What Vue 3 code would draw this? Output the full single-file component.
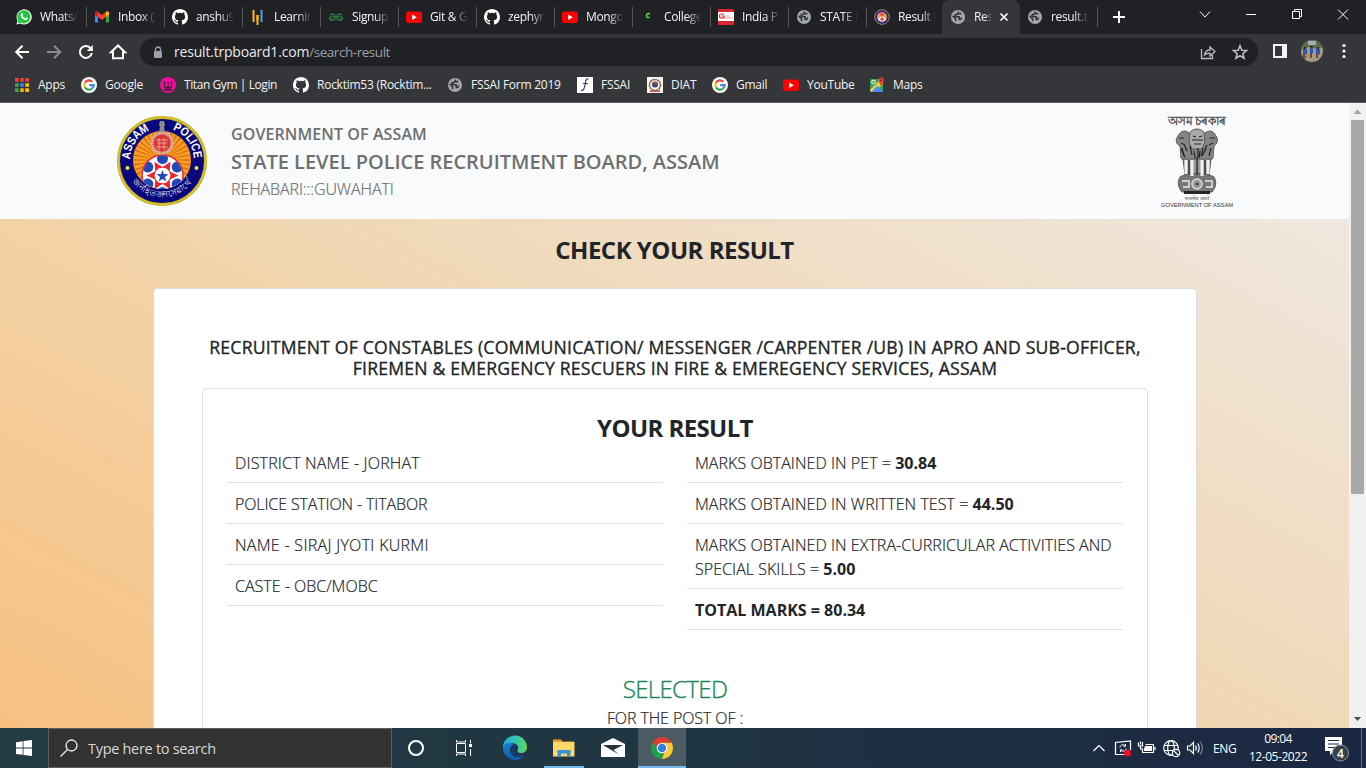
<script setup>
const tabs = [
  { t: 'WhatsApp', i: 'whatsapp' }, { t: 'Inbox (3)', i: 'gmail' }, { t: 'anshu99', i: 'github' },
  { t: 'Learning', i: 'bars' }, { t: 'Signup', i: 'gfg' }, { t: 'Git & Gi', i: 'youtube' },
  { t: 'zephyrs', i: 'github' }, { t: 'Mongo', i: 'youtube' }, { t: 'College', i: 'leaf' },
  { t: 'India Po', i: 'post' }, { t: 'STATE L', i: 'globe' }, { t: 'Result P', i: 'police' },
  { t: 'Result', i: 'globe', active: true }, { t: 'result.tr', i: 'globe' },
]
const bookmarks = [
  { t: 'Apps', i: 'apps', w: 67 }, { t: 'Google', i: 'google', w: 79 },
  { t: 'Titan Gym | Login', i: 'titan', w: 133 }, { t: 'Rocktim53 (Rocktim...', i: 'github', w: 154 },
  { t: 'FSSAI Form 2019', i: 'globe', w: 130 }, { t: 'FSSAI', i: 'fssai', w: 70 },
  { t: 'DIAT', i: 'diat', w: 65 }, { t: 'Gmail', i: 'google', w: 71 },
  { t: 'YouTube', i: 'youtube', w: 86 }, { t: 'Maps', i: 'maps', w: 70 },
]
const left = [
  { t: 'DISTRICT NAME - JORHAT', s: 0.18 }, { t: 'POLICE STATION - TITABOR', s: -0.12 },
  { t: 'NAME - SIRAJ JYOTI KURMI', s: 0.3 }, { t: 'CASTE - OBC/MOBC', s: 0 },
]
const right = [
  ['MARKS OBTAINED IN PET = ', '30.84'],
  ['MARKS OBTAINED IN WRITTEN TEST = ', '44.50'],
  ['MARKS OBTAINED IN EXTRA-CURRICULAR ACTIVITIES AND SPECIAL SKILLS = ', '5.00'],
  ['', 'TOTAL MARKS = 80.34'],
]
const rays = Array.from({ length: 36 }, (_, n) => n * 10)
const sixths = [0, 60, 120, 180, 240, 300]
</script>

<template>
  <div class="screen">
    <svg class="defs" width="0" height="0">
      <symbol id="whatsapp" viewBox="0 0 16 16"><path d="M.4 15.6 1.5 11.7A7.6 7.6 0 1 1 4.4 14.6Z" fill="#fff" /><path d="M1.7 14.3 2.4 11.6A6.6 6.6 0 1 1 4.6 13.6Z" fill="#25c63f" /><path d="M5.4 4.3c.5-.5 1-.3 1.1 0l.6 1.4c.1.4-.5.8-.6 1.1.6 1.2 1.4 1.9 2.6 2.4.3-.1.7-.9 1.1-.8l1.4.7c.5.3 0 1.3-.6 1.7-1 .6-2.6.1-4-.9C5.400 8.700 4.400 7.100 4.600 5.700c.1-.6.4-1.100.8-1.400Z" fill="#fff" /></symbol>
      <symbol id="gmail" viewBox="0 0 16 16"><path d="M1 4v9.500h3V7z" fill="#4285f4" /><path d="M15 4v9.500h-3V7z" fill="#34a853" /><path d="M1 4.300C1 2.400 3 2 4.300 3L8 5.900 11.700 3C13 2 15 2.400 15 4.300L14.700 6 8 11 1.300 6z" fill="#ea4335" /><path d="M12 2.900C13.500 2 15 2.600 15 4.300v1.500l-3 2.300z" fill="#fbbc04" /><path d="M1 4.300v1.500l3 2.300V2.900C2.500 2 1 2.600 1 4.300" fill="#c5221f" /></symbol>
      <symbol id="github" viewBox="0 0 16 16"><path fill="#fff" d="M8 0C3.580 0 0 3.580 0 8c0 3.540 2.290 6.530 5.470 7.590.4.070.55-.17.55-.38 0-.19-.010-.82-.010-1.490-2.010.37-2.530-.49-2.690-.94-.090-.23-.48-.94-.82-1.130-.28-.15-.68-.52-.010-.53.63-.010 1.080.58 1.230.82.72 1.210 1.870.87 2.330.66.070-.52.28-.87.51-1.070-1.780-.2-3.640-.89-3.640-3.950 0-.87.31-1.590.82-2.150-.080-.2-.36-1.020.080-2.120 0 0 .67-.21 2.200.82a7.600 7.600 0 0 1 4 0c1.530-1.040 2.200-.82 2.200-.82.44 1.100.16 1.920.080 2.120.51.56.82 1.270.82 2.150 0 3.070-1.870 3.750-3.650 3.950.29.25.54.73.54 1.480 0 1.070-.010 1.930-.010 2.200 0 .21.15.46.55.38A8 8 0 0 0 16 8c0-4.420-3.580-8-8-8Z" /></symbol>
      <symbol id="bars" viewBox="0 0 16 16"><path d="M3.500 1v12M7.500 6v5M7.500 13v3" stroke="#fbb81b" stroke-width="2" /><path d="M11.500 1v12" stroke="#4ba5d8" stroke-width="2" /><path d="M7.500 6v7" stroke="#fbb81b" stroke-width="2" /></symbol>
      <symbol id="gfg" viewBox="0 0 16 16"><path d="M2 6.200C4 4.200 7.400 5 7.400 8M1.500 8h13M1.500 8c0 4 5 4 5.800.8M14 6.200C12 4.200 8.600 5 8.600 8M14.500 8c0 4-5 4-5.800.8" fill="none" stroke="#2f8d46" stroke-width="1.200" /></symbol>
      <symbol id="youtube" viewBox="0 0 16 16"><rect y="2.500" width="16" height="11.500" rx="2.800" fill="#f00" /><path d="m6.200 5.500 4.600 2.700-4.600 2.700z" fill="#fff" /></symbol>
      <symbol id="leaf" viewBox="0 0 16 16"><path d="M4 4C9 2 12 3 12 3s-1 8-6 8l-1.500 3z" fill="#10300f" /><path d="M10 5C7.500 3.800 6.500 5 6.500 7s2 2 3 1" fill="none" stroke="#8bc486" stroke-width="1.400" /></symbol>
      <symbol id="post" viewBox="0 0 16 16"><path d="M0 0h16v16H0z" fill="#fff" /><path d="M0 0h16v3H0zM0 12h16v4H0z" fill="#d9252d" /><path d="M6 5H3.500a2 2 0 0 0 0 4H6V7H4" fill="none" stroke="#d9252d" stroke-width="1.200" /><path d="M7 9h8M8 7h3" stroke="#e8868a" stroke-width=".8" /></symbol>
      <symbol id="globe" viewBox="0 0 16 16"><circle cx="8" cy="8" r="7" fill="#a4a8ad" /><path d="M8.200 2.500v1.800L6.800 5.600H5.200v2.200h4v2.700h1.500l1-2.200M2.600 6.700l3 3.300v2.200M8.200 4.600h3.200" stroke="#34353a" stroke-width="1.600" fill="none" /></symbol>
      <symbol id="police" viewBox="0 0 16 16"><circle cx="8" cy="8" r="7.300" fill="#24248c" stroke="#a88d4c" /><circle cx="8" cy="8" r="5" fill="#ee9a3c" /><circle cx="8" cy="5" r="2.200" fill="#d6605a" /><path d="M3.800 11a4.300 4.300 0 0 1 8.400 0L8 13z" fill="#eef" /><path d="m8 7.500 1 2 2 .5-2 1-1 1.500-1-1.500-2-1 2-.500z" fill="#e0453d" /></symbol>
      <symbol id="apps" viewBox="0 0 16 16"><path d="M1 1h4v4H1zM6 1h4v4H6zM11 1h4v4h-4z" fill="#ea4335" /><path d="M11 11h4v4h-4zM11 6h4v4h-4z" fill="#fbbc04" /><path d="M1 6h4v4H1z" fill="#34a853" /><path d="M6 6h4v4H6z" fill="#4285f4" /><path d="M1 11h4v4H1z" fill="#34a853" /><path d="M6 11h4v4H6z" fill="#fbbc04" /><path d="M5.500 0v16M10.500 0v16M0 5.500h16M0 10.500h16" stroke="#35363a" stroke-width="1.600" /></symbol>
      <symbol id="google" viewBox="0 0 16 16"><circle cx="8" cy="8" r="8" fill="#fff" /><g fill="none" stroke-width="2.200"><path d="M11.300 4.700A4.700 4.700 0 0 0 3.900 5.700" stroke="#ea4335" /><path d="M3.900 5.700a4.700 4.700 0 0 0 0 4.600" stroke="#fbbc05" /><path d="M3.900 10.300a4.700 4.700 0 0 0 7.200 1.200" stroke="#34a853" /><path d="M11.100 11.500A4.700 4.700 0 0 0 12.700 8.200H8.200" stroke="#4285f4" /></g></symbol>
      <symbol id="titan" viewBox="0 0 16 16"><circle cx="8" cy="8" r="8" fill="#f50a9c" /><path d="M4.500 4v5q0 2 1.800 2T8 9V5v4q0 2 1.800 2t1.700-2V4M3.500 13h9" fill="none" stroke="#35202f" stroke-width="1.300" /></symbol>
      <symbol id="fssai" viewBox="0 0 16 16"><path d="M0 0h16v16H0z" fill="#fff" /><path d="M11.500 2C8.500 1.500 8.600 5 8 8s-1 6-4 5.500M6 6.500h5" fill="none" stroke="#3b3c78" stroke-width="1.200" /></symbol>
      <symbol id="diat" viewBox="0 0 16 16"><path d="M0 0h16v16H0z" fill="#f7f3ec" /><circle cx="8" cy="8" r="5.500" fill="none" stroke="#7c6043" stroke-width="1.600" stroke-dasharray="2 .5" /><circle cx="8" cy="7.500" r="3" fill="#304b84" /><path d="M5.500 6h5M3 14h10" stroke="#b64b38" stroke-width="1.300" /></symbol>
      <symbol id="maps" viewBox="0 0 16 16"><rect x="1" y="2" width="13" height="13" rx="1.500" fill="#34a853" /><path d="M1 13 12 2l2 1v4L5.500 15H2z" fill="#f2d04c" /><path d="m8.500 8.500 5.500 6.500H2.500z" fill="#4c8cf5" /><circle cx="4.500" cy="5" r="1.800" fill="none" stroke="#fff" /><path d="M12.200 9C11 6.600 9.500 5.500 9.500 3.200a2.700 2.700 0 0 1 5.400 0C14.900 5.500 13.300 6.600 12.200 9Z" fill="#ea4335" /><circle cx="12.200" cy="3.200" r="1" fill="#8c1d18" /></symbol>
    </svg>

    <div class="strip">
      <div v-for="(tab, n) in tabs" :key="n" class="tab" :class="{ active: tab.active, before: n === 11 }">
        <svg class="fav"><use :href="'#' + tab.i" /></svg>
        <span class="label">{{ tab.t }}</span>
        <svg v-if="tab.active" class="x" viewBox="0 0 10 10"><path d="m1.500 1.500 7 7m0-7-7 7" /></svg>
      </div>
      <svg class="plus" viewBox="0 0 14 14"><path d="M7 1v12M1 7h12" /></svg>
      <svg class="winctl" viewBox="0 0 150 34"><path d="m9 11.500 5 5.500 5-5.500M55 14.500h10" /><path d="M101.500 11.500h7v7h-7zM103.500 11V9.500h7v7H109" /><path d="m147 9.500 10 10m0-10-10 10" /></svg>
    </div>

    <div class="toolbar">
      <svg class="nav" viewBox="0 0 136 34">
        <path d="M29 18H16.500m6-6.300L16.200 18l6.300 6.300" /><path class="dim" d="M47 18h13m-6-6.300 6.300 6.300-6.300 6.300" />
        <path d="M90.700 14.300A6 6 0 1 0 91.800 19" /><path class="solid" d="M92.800 11v6h-6z" />
        <path d="M111 18.200 118 11.500l7 6.700h-2v6h-10v-6z" />
      </svg>
      <div class="omni">
        <svg class="lock" viewBox="0 0 10 13"><path d="M2.500 5V3.500a2.500 2.500 0 0 1 5 0V5" fill="none" stroke="#9aa0a6" stroke-width="1.400" /><rect x="1" y="5" width="8" height="7" rx="1" fill="#9aa0a6" /></svg>
        <span class="url">result.trpboard1.com<i>/search-result</i></span>
        <svg class="share" viewBox="0 0 16 16"><path d="M1.500 5v9.500h11V11M4.500 11c.5-3.500 2.500-5 5.500-5V3l5 4.500L10 12V9.200c-2.300-.1-4 .4-5.500 1.800Z" /></svg>
        <svg class="star" viewBox="0 0 16 16"><path d="m8 1.700 1.800 4.500 4.800.3L10.900 9.600l1.200 4.700L8 11.700l-4.100 2.600 1.200-4.700L1.400 6.500l4.800-.3z" /></svg>
      </div>
      <svg class="panel" viewBox="0 0 14 14"><path d="M1 1h12v12H1z" fill="none" stroke="#f1f3f4" stroke-width="2" /><path d="M9 1h4v12H9z" fill="#f1f3f4" /></svg>
      <svg class="avatar" viewBox="0 0 22 22"><clipPath id="av"><circle cx="11" cy="11" r="11" /></clipPath><g clip-path="url(#av)"><path d="M0 0h22v22H0z" fill="#a39b80" /><path d="M0 0h22v7l-6 2-8-2-8 3z" fill="#5c6d4a" /><path d="M7 1h8v4H7z" fill="#a0adbd" /><path d="M2 9h4v5H2zM9 8h3v5H9zM15 9h4v5h-4z" fill="#3153b9" /><path d="M3 14v5M10 13v5M16 14v4" stroke="#52323a" stroke-width="1.500" /><path d="M3 8h2M9.500 7h2M16 8h2" stroke="#2f2421" stroke-width="2" /><path d="M5 15v3M17 14h2" stroke="#d23431" /></g></svg>
      <svg class="dots" viewBox="0 0 4 16"><circle cx="2" cy="2.500" r="1.600" /><circle cx="2" cy="8" r="1.600" /><circle cx="2" cy="13.500" r="1.600" /></svg>
    </div>

    <div class="marks">
      <div v-for="b in bookmarks" :key="b.t" class="bm" :style="{ width: b.w + 'px' }">
        <svg class="fav"><use :href="'#' + b.i" /></svg><span>{{ b.t }}</span>
      </div>
    </div>

    <div class="view">
      <main class="page">
        <header class="head">
          <svg class="logo" viewBox="0 0 90 90">
            <circle cx="45" cy="45" r="43.500" fill="#08087c" stroke="#c9b423" stroke-width="3" /><circle cx="45" cy="45" r="43.500" fill="none" stroke="#f1e04c" stroke-width="1" stroke-dasharray="1 1" />
            <circle cx="45" cy="44" r="29" fill="#f6a11c" />
            <path v-for="r in rays" :key="r" d="M45 44 44.200 15h1.600z" fill="#dd6920" :transform="`rotate(${r} 45 44)`" />
            <clipPath id="inner"><circle cx="45" cy="44" r="29" /></clipPath>
            <clipPath id="ball"><circle cx="45.500" cy="59.500" r="20" /></clipPath>
            <g clip-path="url(#inner)">
              <circle cx="45.500" cy="59.500" r="20.500" fill="#fff" stroke="#e32b36" stroke-width="1.500" />
              <g clip-path="url(#ball)">
                <g v-for="r in sixths" :key="r" :transform="`rotate(${r} 45.500 59.500)`">
                  <circle cx="45.500" cy="42.500" r="5.500" fill="#2448b4" />
                </g>
                <g v-for="r in sixths" :key="r" :transform="`rotate(${r + 30} 45.500 59.500)`">
                  <path d="m45.500 43.500 4.500 9.500-4.500-1.500-4.500 1.500z" fill="#ed2634" />
                </g>
              </g>
              <path d="m45.500 54 1.500 4 4.500.3-3.500 2.800 1.200 4.200-3.700-2.300-3.700 2.300 1.200-4.200-3.500-2.800 4.500-.3z" fill="#2448b4" />
            </g>
            <circle cx="45" cy="27" r="10" fill="#df3430" stroke="#d4b2aa" stroke-width="3" stroke-dasharray="2 .5" /><path d="M39 24h12M40 27h10M39 31h12M42 22v12M47 22v12" stroke="#e5a19a" stroke-width="1" />
            <path d="M43 5h4l1 4-1 2 1 5h-6l1-5-1-2z" fill="#8b8b88" />
            <path id="arcTop" d="M13.200 43.500A31.800 31.800 0 0 1 76.800 43.500" fill="none" />
            <path id="arcBottom" d="M12 61A37 37 0 0 0 78 61" fill="none" />
            <text class="badge"><textPath href="#arcTop" startOffset="0%" textLength="37" lengthAdjust="spacingAndGlyphs">ASSAM</textPath></text>
            <text class="badge"><textPath href="#arcTop" startOffset="61%" textLength="38" lengthAdjust="spacingAndGlyphs">POLICE</textPath></text>
            <text class="motto"><textPath href="#arcBottom" startOffset="50%" text-anchor="middle">জনহিতজনসেৱাৰ্থে</textPath></text>
            <circle cx="10.500" cy="52" r="2" fill="#f5df3d" /><circle cx="79.500" cy="52" r="2" fill="#f5df3d" />
          </svg>
          <div class="heads"><p class="g1">GOVERNMENT OF ASSAM</p><p class="g2">STATE LEVEL POLICE RECRUITMENT BOARD, ASSAM</p><p class="g3">REHABARI:::GUWAHATI</p></div>
          <svg class="emblem" viewBox="0 0 74 94">
            <text x="37" y="9.500" text-anchor="middle" class="as1">অসম চৰকাৰ</text>
            <g stroke="#5a5a5a" stroke-width="1">
              <path d="M18 21c3-6 8-6 11-3l1 8 14 0 1-8c4-3 8-3 11 3 3 4 1 8-2 10l-1 12-4 4H25l-4-4-1-12c-4-2-5-6-2-10Z" fill="#858585" />
              <path d="M30 17c4-4 10-4 14 0l1 10-3 7H32l-3-7Z" fill="#aaa" />
              <path d="M23 44h28l-2 16H25Z" fill="#999" />
              <path d="M20 62c9-5 25-5 34 0 3 6 2 10-2 15H22c-4-5-5-9-2-15Z" fill="#777" />
            </g>
            <path d="M26 45v14M32 45v16M42 45v16M48 45v14" stroke="#f0f0f0" stroke-width="3" /><path d="M29 45v14M37 42v18M45 45v14" stroke="#333" stroke-width="1.500" />
            <path d="m33 21 3 1m3 0 3-1M32 25h11M34 29h7M19 23h5m26 0h5M24 29l3 7m3-5 2 9m6-7 0 9m5-9-2 8m6-11-3 7m-23-3 4 8m17-1 4-7M22 33l2 8m10-5 1 7m5-7-1 7m12-10-2 8M21 28l4 2m28-2-4 2" fill="none" stroke="#252525" stroke-width="1.200" />
            <circle cx="37" cy="69" r="5" fill="#999" stroke="#ddd" stroke-width="1.500" /><circle cx="37" cy="69" r="1.500" fill="#444" /><path d="M22 66h7v6h-6m22-6h7v6h-6" stroke="#ccc" stroke-width="2" fill="none" /><path d="M24 77.500h26" stroke="#252525" stroke-width="3" />
            <text x="37" y="85" text-anchor="middle" class="as2">सत्यमेव जयते</text>
            <text x="1" y="92" textLength="72" lengthAdjust="spacingAndGlyphs" class="as3">GOVERNMENT OF ASSAM</text>
          </svg>
        </header>
        <section class="body">
          <h2 class="check">CHECK YOUR RESULT</h2>
          <div class="card">
            <h5 class="rec"><span>RECRUITMENT OF CONSTABLES (COMMUNICATION/ MESSENGER /CARPENTER /UB) IN APRO AND SUB-OFFICER,</span><span>FIREMEN &amp; EMERGENCY RESCUERS IN FIRE &amp; EMEREGENCY SERVICES, ASSAM</span></h5>
            <div class="inner">
              <h2 class="your">YOUR RESULT</h2>
              <div class="cols">
                <div><div v-for="l in left" :key="l.t" class="row" :style="{ letterSpacing: l.s + 'px' }">{{ l.t }}</div></div>
                <div><div v-for="r in right" :key="r[1]" class="row">{{ r[0] }}<b>{{ r[1] }}</b></div></div>
              </div>
              <p class="sel">SELECTED</p>
              <p class="post">FOR THE POST OF :</p>
            </div>
          </div>
        </section>
      </main>
      <aside class="scroll"><svg viewBox="0 0 17 17"><path d="m4.500 11 4-4.500 4 4.500z" fill="#a3a3a3" /></svg><div class="thumb"></div><svg class="down" viewBox="0 0 17 17"><path d="m5 6 3.500 4L12 6z" fill="#505050" /></svg></aside>
    </div>

    <footer class="task">
      <div class="start"><svg viewBox="0 0 16 16"><path d="m0 2.200 6.700-1v6.400H0zM7.500 1.100 16 0v7.600H7.500zM0 8.400h6.700v6.400L0 13.900zM7.500 8.400H16V16l-8.500-1.100z" fill="#fff" /></svg></div>
      <div class="search"><svg viewBox="0 0 18 18"><circle cx="11.500" cy="6.500" r="5.500" /><path d="m7.500 10.500-7 7" /></svg><span>Type here to search</span></div>
      <div class="app"><svg width="24" height="24" viewBox="0 0 24 24"><circle cx="12" cy="12" r="7" fill="none" stroke="#fff" stroke-width="2" /></svg></div>
      <div class="app"><svg width="24" height="24" viewBox="0 0 24 24"><path d="M3.500 7.500h9v9h-9zM3.500 4v2h9V4M3.500 20v-2h9v2M17.500 4v3.500M17.500 13v7" fill="none" stroke="#fff" /><path d="M16 8h3v3h-3z" fill="#fff" /></svg></div>
      <div class="app"><svg width="26" height="26" viewBox="0 0 26 26">
        <defs><linearGradient id="eg" x1="0" x2="1"><stop offset="0" stop-color="#2aa9dc" /><stop offset=".55" stop-color="#36c6b5" /><stop offset="1" stop-color="#64d64d" /></linearGradient><linearGradient id="eb" y1="0" y2="1" x2="0"><stop offset="0" stop-color="#1683d8" /><stop offset="1" stop-color="#0e5ba8" /></linearGradient></defs>
        <path d="M1 13A12 12 0 0 1 25 12c0 4-2.500 6-6 6-2.500 0-4-1-3.500-2.500 1.500-3 .5-6-3-7C7 7 2 10 1 13" fill="url(#eg)" /><path d="M1 13C2 8 8 6.500 12 9c-4 1-6 7-2 11 3 3 8 3 13-.5A12 12 0 0 1 1 13" fill="url(#eb)" /><path d="M12 10c-4 3-4 9 1 11 3 1 7 1 10-1.500-5 2-10 .5-11-4-.3-2 .5-3 2-4z" fill="#113f7c" /></svg></div>
      <div class="app run"><svg width="24" height="24" viewBox="0 0 24 24"><path d="M1 3.500h8l1.500 2H22v14H1z" fill="#e9a01e" /><path d="M1 6h21.500v14.500H1z" fill="#ffd76a" /><path d="M5.500 20.500v-6.500h13v6.500h-3.500v-3h-6v3z" fill="#3792da" /></svg></div>
      <div class="app"><svg width="24" height="24" viewBox="0 0 24 24"><path d="m0 8 12-6 12 6v13H0z" fill="#fff" /><path d="M2 9h20L12.500 14l5.500 4.500L12 15z" fill="#21343f" /></svg></div>
      <div class="app run on"><svg width="24" height="24" viewBox="0 0 24 24"><path d="M21.520 6.500A11 11 0 0 1 12 23l0-11z" fill="#fcc934" /><path d="M12 23A11 11 0 0 1 2.480 6.500L12 12l3 3z" fill="#1fa04b" /><path d="M12 6.500h9.520L17 13z" fill="#fcc934" /><path d="M2.480 6.500A11 11 0 0 1 21.520 6.500H12L8 12z" fill="#e33b2e" /><circle cx="12" cy="12" r="5.300" fill="#fff" /><circle cx="12" cy="12" r="4.200" fill="#347de5" /></svg></div>
      <div class="tray">
        <svg viewBox="0 0 116 24" width="116" height="24" fill="none" stroke="#fff" stroke-width="1.200">
          <path d="m1.500 15 5.500-5.500 5.500 5.500" />
          <path d="M32 18.500h-8.500V6.500l15-1.500V14M30.500 18.500h2" /><path d="M28 11.500c0-3 4-3.500 5.500-1.500V8m0 2.200h-2.200M34 12.500c0 3-4 3.500-5.500 1.500v2m0-2.200h2" stroke-width="1" /><circle cx="35.500" cy="17" r="3.500" fill="#e81123" stroke="none" />
          <path d="M53.500 8.500h8v8h-11v-4M63 11v3" /><path d="M53 10h7v5h-8v-2z" fill="#fff" stroke="none" /><path d="M48.500 5.500v3m-2-2v3.500h4V6M48.500 10v3h2" />
          <circle cx="79" cy="12" r="7.300" /><ellipse cx="79" cy="12" rx="3.300" ry="7.300" /><path d="M72 9.500h14M72 14.500h14" /><circle cx="84" cy="17" r="3.700" fill="#1b2b42" /><path d="m81.500 14.500 5 5" />
          <path d="M95.500 10h2.500l3.500-3.500v11L98 14h-2.500zM103.500 9.500c1 1.500 1 3.500 0 5M105.700 7.500c2 2.500 2 6.500 0 9" /><path d="M108 5.500c3 4 3 9 0 13" stroke="#77818f" />
        </svg>
        <span class="eng">ENG</span>
        <div class="clock"><span class="tm">09:04</span><span class="dt">12-05-2022</span></div>
        <svg class="note" viewBox="0 0 26 26" width="26" height="26"><path d="M1 0h17v14h-8l-4 4v-4H1z" fill="#fff" /><path d="M4 3.500h11M4 7h11M4 10.500h8" stroke="#1b2942" stroke-width="1.200" /><circle cx="16.500" cy="16" r="8" fill="#38404a" stroke="#8b919b" /><text x="16.500" y="20.500" text-anchor="middle">4</text></svg>
      </div>
      <div class="peek"></div>
    </footer>
  </div>
</template>

<style>
body { overflow: hidden; }
</style>
<style scoped>
.screen { width: 1366px; height: 768px; overflow: hidden; display: flex; flex-direction: column; font-family: "Open Sans", "Noto Sans", sans-serif; color: #212529; }
.defs { position: absolute; }
svg { display: block; flex: none; overflow: visible; }
p, h2, h5 { margin: 0; white-space: nowrap; }
.strip { height: 34px; background: #202124; display: flex; padding-left: 8px; color: #f1f3f4; font-size: 12px; flex: none; }
.tab { width: 78px; box-sizing: border-box; padding: 0 8px 0 8px; display: flex; align-items: center; position: relative; flex: none; }
.tab::after { content: ""; position: absolute; right: -1px; top: 7px; width: 1px; height: 20px; background: #54565a; }
.tab.active::after, .tab.before::after { display: none; }
.fav { width: 16px; height: 16px; }
.label { margin-left: 8px; flex: 1; overflow: hidden; white-space: nowrap; letter-spacing: -.35px; line-height: 20px; -webkit-mask-image: linear-gradient(90deg, #000 60%, transparent); mask-image: linear-gradient(90deg, #000 60%, transparent); }
.active { background: #35363a; border-radius: 8px 8px 0 0; margin-left: -2px; width: 78px; margin-right: -1px; }
.active .label { margin-right: 7px; }
.active .x { width: 10px; height: 10px; stroke: #fff; stroke-width: 1.700; margin-right: 3px; }
.plus { width: 14px; height: 14px; margin: 10px 0 0 15px; stroke: #fff; stroke-width: 2; }
.winctl { width: 150px; height: 34px; margin-left: auto; margin-right: 25px; fill: none; stroke: #fff; stroke-width: 1; }
.toolbar { height: 34px; background: #35363a; display: flex; align-items: center; flex: none; }
.nav { width: 136px; height: 34px; fill: none; stroke: #fff; stroke-width: 2; }
.nav .dim { stroke: #8a8b8e; }
.nav .solid { fill: #fff; stroke: none; }
.omni { margin: 2px 0 0 4px; width: 1118px; height: 28px; border-radius: 14px; background: #202124; display: flex; align-items: center; box-sizing: border-box; padding-left: 13px; }
.lock { width: 10px; height: 13px; }
.url { margin-left: 11px; font-size: 14px; line-height: 20px; color: #e8eaed; flex: 1; letter-spacing: -.2px; }
.url i { font-style: normal; font-size: 13.500px; letter-spacing: -.45px; color: #9aa0a6; }
.share, .star { width: 16px; height: 16px; fill: none; stroke: #b9bcc0; stroke-width: 1.300; }
.share { margin-right: 16px; }
.star { margin-right: 10px; stroke-width: 1.600; }
.panel { width: 14px; height: 14px; margin-left: 15px; }
.avatar { width: 22px; height: 22px; margin-left: 14px; }
.dots { width: 4px; height: 16px; margin-left: 19px; fill: #fff; }
.marks { height: 34px; background: #35363a; border-bottom: 1px solid #5d5a60; display: flex; padding: 0 0 2px 14px; box-sizing: content-box; height: 32px; color: #f1f3f4; font-size: 12px; flex: none; }
.bm { display: flex; align-items: center; gap: 8px; white-space: nowrap; flex: none; letter-spacing: -.25px; }
.bm .fav { margin-top: 1px; }
.bm:nth-child(3) { letter-spacing: -.42px; }
.view { height: 625px; flex: none; display: flex; overflow: hidden; }
.page { width: 1349px; display: flex; flex-direction: column; }
.head { height: 116px; flex: none; background: #f8fafc; display: flex; align-items: flex-start; color: #6f6f6f; }
.logo { width: 90px; height: 90px; margin: 13px 24px 0 117px; }
.heads { padding-top: 18px; }
.heads p { line-height: 27px; font-size: 16px; }
.g1, .heads .g2 { font-weight: 600; }
.g1 { letter-spacing: .1px; }
.heads .g2 { font-size: 20px; letter-spacing: -.02px; }
.heads .g3 { font-weight: 300; letter-spacing: -.1px; -webkit-text-stroke: .2px; padding-top: 1px; line-height: 26px; }
.emblem { width: 74px; height: 94px; margin: 12px 115px 0 auto; }
.badge { font: 700 12px "Liberation Sans", sans-serif; fill: #fff; }
.motto { font-size: 8.500px; fill: #eee; }
.as1 { font-size: 11.500px; font-weight: 600; fill: #555; }
.as2 { font-size: 5px; fill: #555; }
.as3 { font: 400 6px "Liberation Sans", sans-serif; fill: #333; }
.body { height: 509px; overflow: hidden; background: linear-gradient(28deg, #f7c081, #f3d2a5 41.500%, #f0d9b9 58.500%, #efe7df); }
.check { margin-top: 16px; height: 29px; line-height: 29px; font-size: 24px; font-weight: 700; text-align: center; letter-spacing: -.5px; }
.card { margin: 24px 152px 0 153px; height: 700px; border: 1px solid #dcdcdc; border-radius: 4px; background: #fff; padding: 48px; box-sizing: border-box; }
.rec { display: flex; flex-direction: column; align-items: center; font-size: 17.600px; line-height: 21px; font-weight: 500; letter-spacing: .2px; -webkit-text-stroke: .35px; }
.inner { margin-top: 9px; height: 500px; border: 1px solid #dfdfdf; border-radius: 4px; padding: 24px; box-sizing: border-box; }
.your { font-size: 24px; line-height: 29px; font-weight: 700; text-align: center; letter-spacing: -.6px; }
.cols { display: grid; grid-template-columns: 436px 436px; gap: 24px; height: 211px; }
.row { border-bottom: 1px solid #dee2e6; padding: 9px 8px 7px; line-height: 24px; font-size: 16px; font-weight: 300; -webkit-text-stroke: .2px; letter-spacing: .05px; }
.row b { font-weight: 700; letter-spacing: 0; -webkit-text-stroke: 0; }
.sel { font-size: 24px; line-height: 29px; font-weight: 300; color: #198754; text-align: center; margin-top: 21px; letter-spacing: -.65px; -webkit-text-stroke: .3px; }
.post { font-size: 16px; line-height: 24px; font-weight: 300; text-align: center; margin-top: 3px; letter-spacing: -.1px; -webkit-text-stroke: .2px; }
.scroll { width: 17px; background: #f1f1f1; display: flex; flex-direction: column; }
.scroll svg { width: 17px; height: 17px; }
.thumb { width: 13px; height: 374px; margin-left: 2px; background: #a8a8a8; }
.scroll .down { margin-top: auto; }
.task { height: 40px; flex: none; display: flex; background: linear-gradient(90deg, #223b45, #203642 45%, #1c2d42 75%, #1b2743); color: #fff; }
.start { width: 48px; display: flex; align-items: center; justify-content: center; }
.search { width: 344px; box-sizing: border-box; background: #323232; border: 1px solid #605d5d; display: flex; align-items: center; padding-left: 11px; gap: 10px; font-size: 14.500px; letter-spacing: -.3px; color: #d8d8d8; }
.search svg { width: 18px; height: 18px; fill: none; stroke: #eee; stroke-width: 1.300; }
.start svg { width: 16px; height: 16px; }
.app { width: 48px; display: flex; align-items: center; justify-content: center; margin-right: 1.300px; box-sizing: border-box; position: relative; }
.run::after { content: ""; position: absolute; left: 4px; right: 4px; bottom: 0; height: 2px; background: #76b9ed; }
.on { background: #4a5b64; }
.on::after { left: 0; right: 0; }
.tray { margin-left: auto; display: flex; align-items: center; font-size: 12px; }
.eng { margin-left: 5px; width: 25px; letter-spacing: -.4px; }
.clock { width: 70px; margin-left: 5px; display: flex; flex-direction: column; text-align: center; line-height: 18px; }
.tm { letter-spacing: -.6px; }
.dt { letter-spacing: -.45px; }
.note { margin: 3px 11px 0 11px; }
.note text { font-size: 12px; fill: #fff; font-weight: 600; }
.peek { width: 4px; border-left: 1px solid #68717f; }
</style>
